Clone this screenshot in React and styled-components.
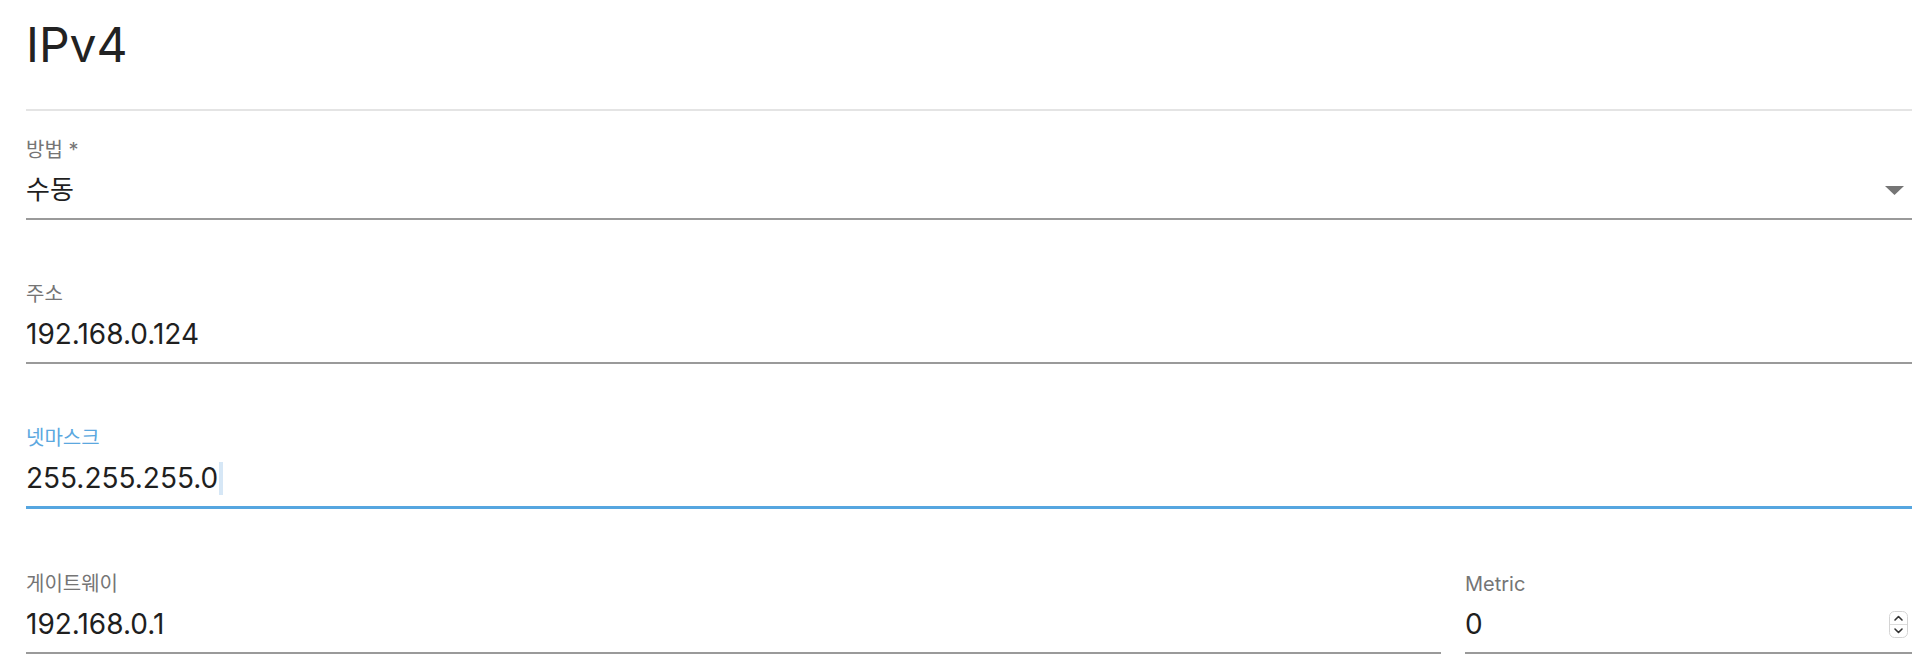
import styled, { createGlobalStyle } from "styled-components";

const GlobalStyle = createGlobalStyle`
    body {
        margin: 0;
        background: #ffffff;
        font-family: Inter, "Noto Sans CJK KR", sans-serif;
    }
`

function DropArrow(){
    return(
        <ArrowBox>
            <svg width="19" height="9" viewBox="0 0 19 9">
                <path d="M0 0 L19 0 L9.5 9 Z" fill="#757575" />
            </svg>
        </ArrowBox>
    )
}

function Spinner(){
    return(
        <SpinBox>
            <svg width="19" height="27" viewBox="0 0 19 27">
                <rect x="0.5" y="0.5" width="18" height="26" rx="5" fill="#fff" stroke="#d4d4d4" />
                <line x1="1" y1="13.5" x2="18" y2="13.5" stroke="#dcdcdc" />
                <path d="M6 9 L9.5 5.5 L13 9" fill="none" stroke="#333" strokeWidth="1.6" strokeLinecap="round" strokeLinejoin="round" />
                <path d="M6 18 L9.5 21.5 L13 18" fill="none" stroke="#333" strokeWidth="1.6" strokeLinecap="round" strokeLinejoin="round" />
            </svg>
        </SpinBox>
    )
}

function Field({ label, value, focused, caret, hangul, children }){
    return(
        <FieldWrap>
            <Label $focused={focused}>{label}</Label>
            <ValueRow $focused={focused}>
                <Value $hangul={hangul}>
                    {value}
                    {caret && <Caret />}
                </Value>
                {children}
            </ValueRow>
        </FieldWrap>
    )
}

export default function App(){
    return(
        <>
        <GlobalStyle />
        <Page>
            <Title>IPv4</Title>
            <Divider />
            <Fields>
                <Field label="방법 *" value="수동" hangul>
                    <DropArrow />
                </Field>
                <Field label="주소" value="192.168.0.124" />
                <Field label="넷마스크" value="255.255.255.0" focused caret />
                <Row>
                    <Field label="게이트웨이" value="192.168.0.1" />
                    <Field label="Metric" value="0">
                        <Spinner />
                    </Field>
                </Row>
            </Fields>
        </Page>
        </>
    )
}

const Page = styled.div`
    padding: 15px 20px 0 26px;
`
const Title = styled.h1`
    margin: 0;
    font-size: 48px;
    line-height: 60px;
    font-weight: 400;
    color: #222222;
`
const Divider = styled.div`
    margin-top: 34px;
    height: 2px;
    background: #e4e4e4;
`
const Fields = styled.div`
    display: flex;
    flex-direction: column;
    gap: 62px;
    padding-top: 27px;
`
const Row = styled.div`
    display: grid;
    grid-template-columns: 1fr 447px;
    gap: 24px;
    margin-top: 2px;
`
const FieldWrap = styled.div`
    display: flex;
    flex-direction: column;
    gap: 8px;
`
const Label = styled.label`
    font-size: 20px;
    line-height: 24px;
    color: ${p => p.$focused ? '#5ba8df' : '#757575'};
`
const ValueRow = styled.div`
    display: flex;
    align-items: center;
    justify-content: space-between;
    padding-bottom: 8px;
    border-bottom: 2px solid ${p => p.$focused ? '#56a6e0' : '#9a9a9a'};
    box-shadow: ${p => p.$focused ? '0 1px 0 #56a6e0' : 'none'};
`
const Value = styled.div`
    display: flex;
    align-items: center;
    font-size: ${p => p.$hangul ? '26px' : '28px'};
    line-height: 40px;
    height: 40px;
    color: #1f1f1f;
`
const Caret = styled.span`
    display: inline-block;
    width: 4px;
    height: 33px;
    margin-left: 1px;
    background: #d6e7f6;
`
const ArrowBox = styled.div`
    display: flex;
    margin-right: 8px;
`
const SpinBox = styled.div`
    display: flex;
    margin-right: 4px;
`
